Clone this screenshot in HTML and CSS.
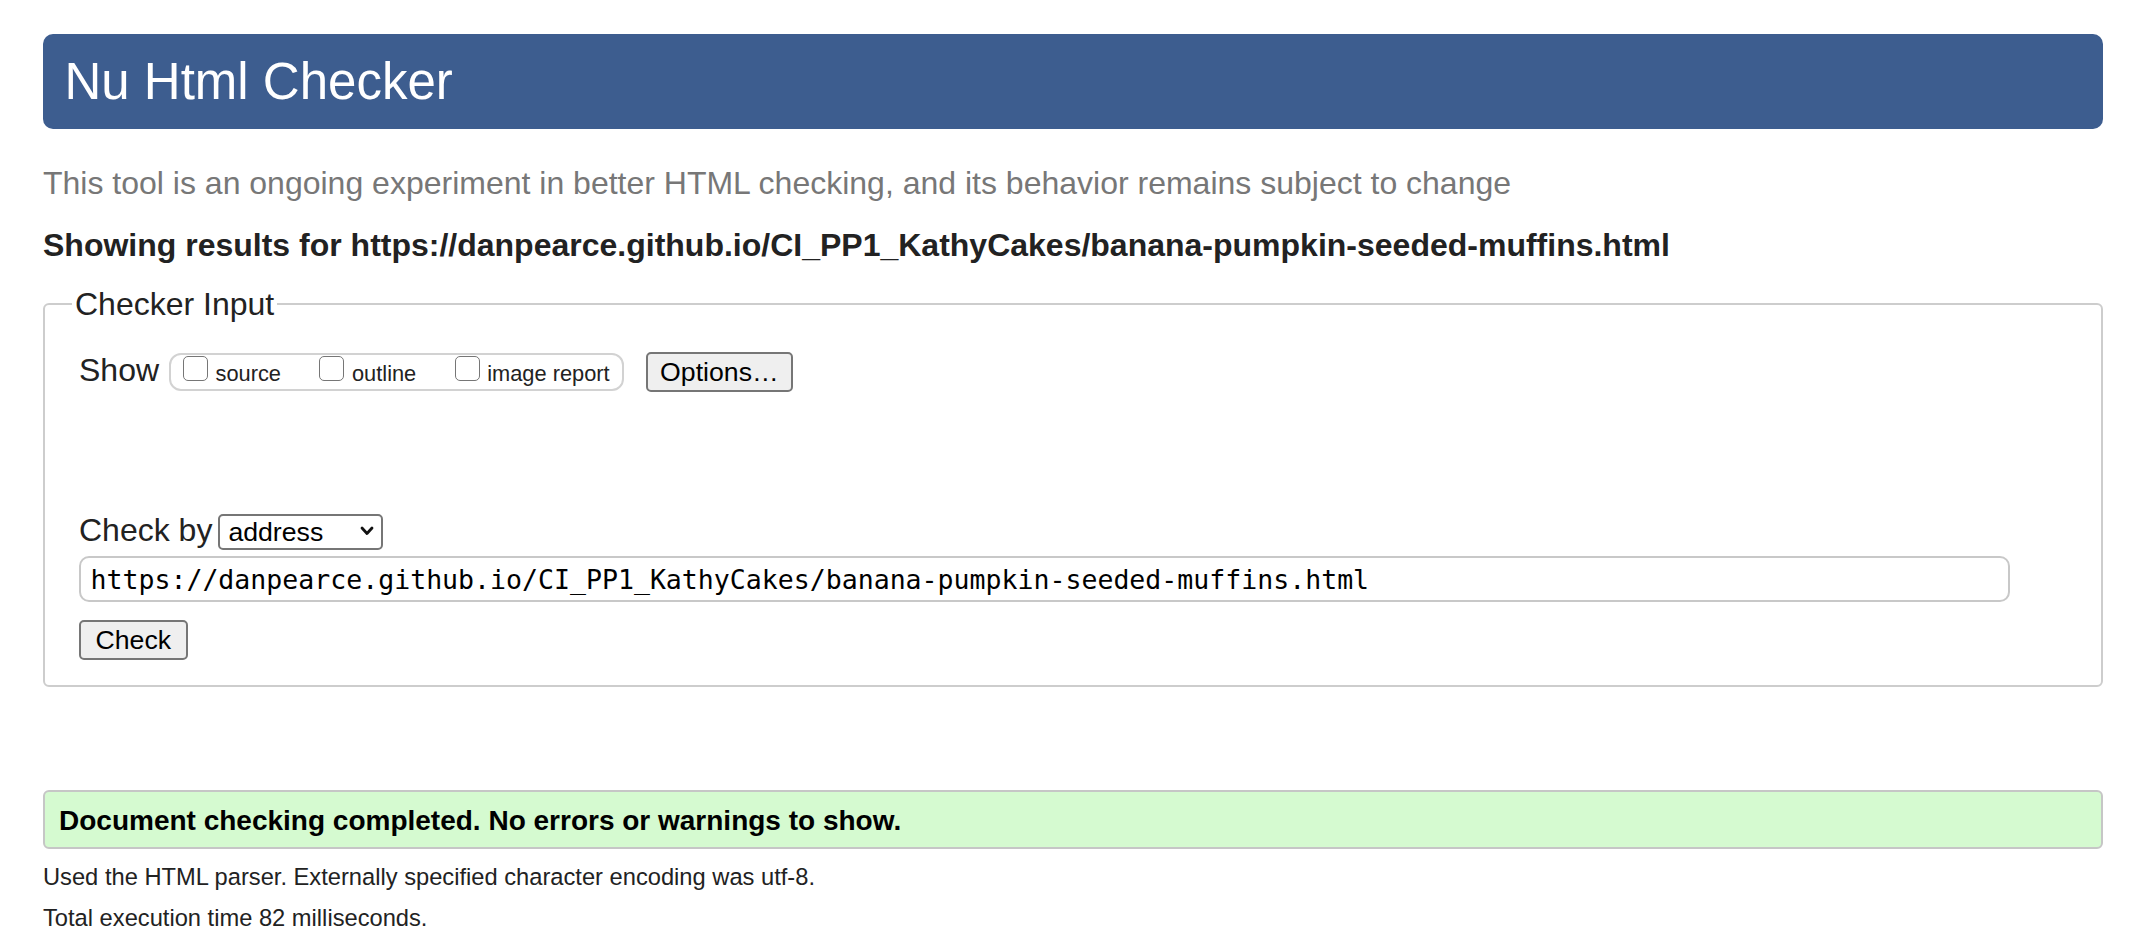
FILE: index.html
```html
<!DOCTYPE html>
<html lang="en">
<head>
<meta charset="utf-8">
<title>Showing results for https://danpearce.github.io/CI_PP1_KathyCakes/banana-pumpkin-seeded-muffins.html - Nu Html Checker</title>
<link rel="stylesheet" href="styles.css">
</head>
<body>
<h1 class="masthead">Nu Html Checker</h1>
<p class="tagline">This tool is an ongoing experiment in better HTML checking, and its behavior remains subject to change</p>
<p class="results-for">Showing results for https://danpearce.github.io/CI_PP1_KathyCakes/banana-pumpkin-seeded-muffins.html</p>
<form class="checker" action="#">
  <fieldset class="checker-input">
    <legend class="checker-legend">Checker Input</legend>
    <div class="checker-body">
      <div class="show-row">
        <span class="row-label">Show</span>
        <span class="show-group">
          <label class="opt"><input type="checkbox" class="cb"><span class="opt-text">source</span></label>
          <label class="opt"><input type="checkbox" class="cb"><span class="opt-text">outline</span></label>
          <label class="opt"><input type="checkbox" class="cb"><span class="opt-text">image report</span></label>
        </span>
        <button type="button" class="btn btn-options">Options…</button>
      </div>
      <div class="checkby-row">
        <span class="row-label row-label-check">Check by</span>
        <span class="select-wrap">
          <select class="select"><option>address</option></select>
          <svg class="chev" width="14" height="10" viewBox="0 0 14 10" aria-hidden="true"><path d="M2 2 L7 7.5 L12 2" fill="none" stroke="#111" stroke-width="2.8" stroke-linecap="round" stroke-linejoin="round"/></svg>
        </span>
      </div>
      <input class="url" type="url" value="https://danpearce.github.io/CI_PP1_KathyCakes/banana-pumpkin-seeded-muffins.html">
      <div class="submit-row"><button type="button" class="btn btn-check">Check</button></div>
    </div>
  </fieldset>
</form>
<p class="success">Document checking completed. No errors or warnings to show.</p>
<p class="meta">Used the HTML parser. Externally specified character encoding was utf-8.</p>
<p class="meta">Total execution time 82 milliseconds.</p>
</body>
</html>
```

FILE: styles.css
```css
html {
  background: #fff;
}

body {
  margin: 0;
  padding: 34px 50px 0 43px;
  font-family: "Liberation Sans", Arial, Helvetica, sans-serif;
  color: #222;
  background: #fff;
}

.masthead {
  margin: 0;
  height: 95px;
  line-height: 95px;
  padding: 0 21.5px;
  background: #3d5d8f;
  color: #fff;
  font-size: 51px;
  font-weight: normal;
  border-radius: 10px;
}

.tagline {
  margin: 35.5px 0 0;
  font-size: 32px;
  line-height: 37px;
  color: #777;
}

.results-for {
  margin: 25px 0 0;
  font-size: 32px;
  line-height: 37px;
  font-weight: bold;
  color: #222;
}

.checker {
  margin: 22px 0 0;
}

.checker-input {
  margin: 0;
  min-width: 0;
  padding: 29px 27px 25px;
  border: 2px solid #cdcdcd;
  border-radius: 6px;
}

.checker-legend {
  padding: 0 3px;
  font-size: 32px;
  line-height: 37px;
  color: #222;
}

.checker-body {
  padding-left: 7px;
}

.show-row {
  display: flex;
  align-items: baseline;
}

.row-label {
  font-size: 32px;
  line-height: 37px;
  margin-right: 10px;
}

.show-group {
  display: inline-flex;
  align-items: center;
  gap: 38.5px;
  box-sizing: border-box;
  height: 38px;
  padding: 0 12px 3.6px 12px;
  border: 2px solid #d2d2d2;
  border-radius: 12px;
}

.opt {
  display: flex;
  align-items: flex-end;
}

.cb {
  appearance: none;
  -webkit-appearance: none;
  box-sizing: border-box;
  width: 25px;
  height: 25px;
  margin: 0 7.5px 5px 0;
  border: 1.5px solid #767676;
  border-radius: 5px;
  background: #fff;
}

.opt-text {
  font-size: 21.8px;
  line-height: 25px;
  color: #222;
}

.btn {
  box-sizing: border-box;
  height: 40px;
  padding: 0 12.5px;
  font-family: "Liberation Sans", Arial, Helvetica, sans-serif;
  font-size: 26.67px;
  color: #000;
  background: #efefef;
  border: 2px solid #767676;
  border-radius: 5px;
}

.btn-options {
  margin-left: 22px;
}

.btn-check {
  padding: 0 14.5px;
}

.checkby-row {
  display: flex;
  align-items: baseline;
  margin-top: 120px;
}

.row-label-check {
  margin-right: 6px;
}

.select-wrap {
  position: relative;
  display: inline-block;
}

.select {
  appearance: none;
  -webkit-appearance: none;
  box-sizing: border-box;
  width: 165px;
  height: 36px;
  margin: 0;
  padding: 0 0 0 8px;
  font-family: "Liberation Sans", Arial, Helvetica, sans-serif;
  font-size: 26.67px;
  color: #000;
  background: #fff;
  border: 2px solid #767676;
  border-radius: 5px;
}

.chev {
  position: absolute;
  right: 9px;
  top: 12px;
}

.url {
  display: block;
  box-sizing: border-box;
  width: 1931px;
  height: 46px;
  margin: 6px 0 0;
  padding: 0 9.5px;
  font-family: "DejaVu Sans Mono", "Liberation Mono", monospace;
  font-size: 26.55px;
  color: #000;
  background: #fff;
  border: 2px solid #c8c8c8;
  border-radius: 10px;
}

.submit-row {
  margin-top: 18px;
}

.success {
  box-sizing: border-box;
  height: 59px;
  margin: 103px 0 0;
  padding: 0 14px;
  line-height: 57px;
  font-size: 28px;
  font-weight: bold;
  color: #000;
  background: #d5fad0;
  border: 2px solid #c6c6c6;
  border-radius: 6px;
}

.meta {
  margin: 13.7px 0 0;
  font-size: 23.7px;
  line-height: 28px;
  color: #222;
}
```
